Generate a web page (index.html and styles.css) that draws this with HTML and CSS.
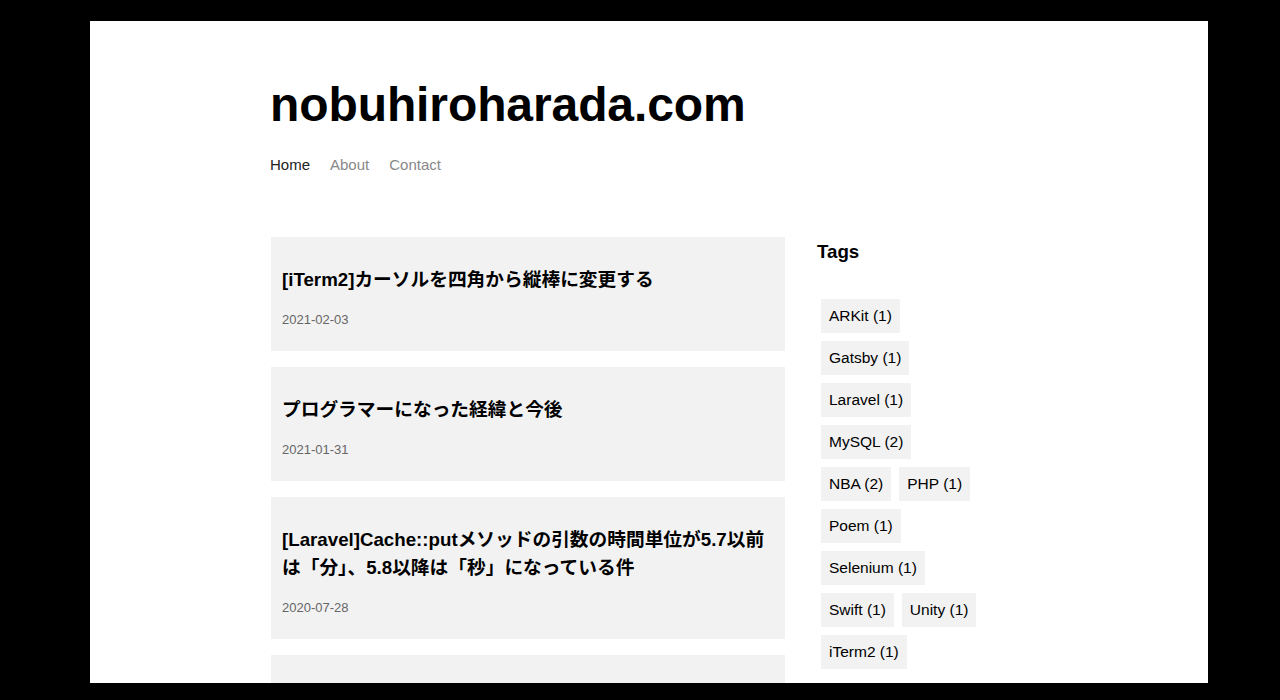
FILE: index.html
```html
<!DOCTYPE html>
<html lang="ja">
<head>
<meta charset="utf-8">
<title>nobuhiroharada.com</title>
<link rel="stylesheet" href="styles.css">
</head>
<body>
<div class="frame">
  <div class="container">
    <header class="site-header">
      <h1 class="site-title">nobuhiroharada.com</h1>
      <nav class="site-nav">
        <a class="nav-link active" href="#">Home</a>
        <a class="nav-link" href="#">About</a>
        <a class="nav-link" href="#">Contact</a>
      </nav>
    </header>
    <div class="layout">
      <main class="posts">
        <article class="card">
          <h2 class="card-title">[iTerm2]カーソルを四角から縦棒に変更する</h2>
          <div class="card-date">2021-02-03</div>
        </article>
        <article class="card">
          <h2 class="card-title">プログラマーになった経緯と今後</h2>
          <div class="card-date">2021-01-31</div>
        </article>
        <article class="card">
          <h2 class="card-title">[Laravel]Cache::putメソッドの引数の時間単位が5.7以前は「分」、5.8以降は「秒」になっている件</h2>
          <div class="card-date">2020-07-28</div>
        </article>
        <article class="card">
          <h2 class="card-title">[NBA]ウィザーズ八村塁</h2>
          <div class="card-date">2020-07-20</div>
        </article>
      </main>
      <aside class="sidebar">
        <h3 class="sidebar-title">Tags</h3>
        <ul class="tags">
          <li class="tag">ARKit (1)</li>
          <li class="tag">Gatsby (1)</li>
          <li class="tag">Laravel (1)</li>
          <li class="tag">MySQL (2)</li>
          <li class="tag">NBA (2)</li>
          <li class="tag">PHP (1)</li>
          <li class="tag">Poem (1)</li>
          <li class="tag">Selenium (1)</li>
          <li class="tag">Swift (1)</li>
          <li class="tag">Unity (1)</li>
          <li class="tag">iTerm2 (1)</li>
        </ul>
      </aside>
    </div>
  </div>
</div>
</body>
</html>
```

FILE: styles.css
```css
html, body {
  margin: 0;
  padding: 0;
  background: #000;
  height: 700px;
  overflow: hidden;
}

body {
  font-family: "Liberation Sans", "Noto Sans CJK JP", sans-serif;
  color: #111;
}

.frame {
  width: 1118px;
  height: 662px;
  margin: 21px 0 0 90px;
  background: #fff;
  overflow: hidden;
}

.container {
  width: 758px;
  margin: 0 auto;
  padding-top: 55px;
}

.site-title {
  margin: 0;
  font-size: 48px;
  line-height: 58px;
  font-weight: 700;
  color: #000;
  letter-spacing: -0.1px;
}

.site-nav {
  display: flex;
  gap: 20px;
  margin-top: 21px;
}

.nav-link {
  font-size: 15px;
  line-height: 20px;
  color: #888;
  text-decoration: none;
}

.nav-link.active {
  color: #222;
}

.layout {
  display: grid;
  grid-template-columns: 514px 171px;
  column-gap: 32px;
  margin-top: 62px;
  padding-left: 1px;
}

.posts {
  display: flex;
  flex-direction: column;
  gap: 16px;
}

.card {
  background: #f2f2f2;
  padding: 29px 11px 21px;
}

.card-title {
  margin: 0 0 16px;
  font-size: 18.72px;
  line-height: 28px;
  font-weight: 700;
  color: #000;
}

.card-date {
  font-size: 13px;
  line-height: 20px;
  color: #666;
}

.sidebar-title {
  margin: 4px 0 0;
  font-size: 18.72px;
  line-height: 22px;
  font-weight: 700;
  color: #000;
}

.tags {
  list-style: none;
  margin: 32px 0 0;
  padding: 0;
  display: flex;
  flex-wrap: wrap;
}

.tag {
  margin: 4px;
  padding: 8px;
  background: #f2f2f2;
  font-size: 15.5px;
  line-height: 18px;
  color: #000;
}
```
